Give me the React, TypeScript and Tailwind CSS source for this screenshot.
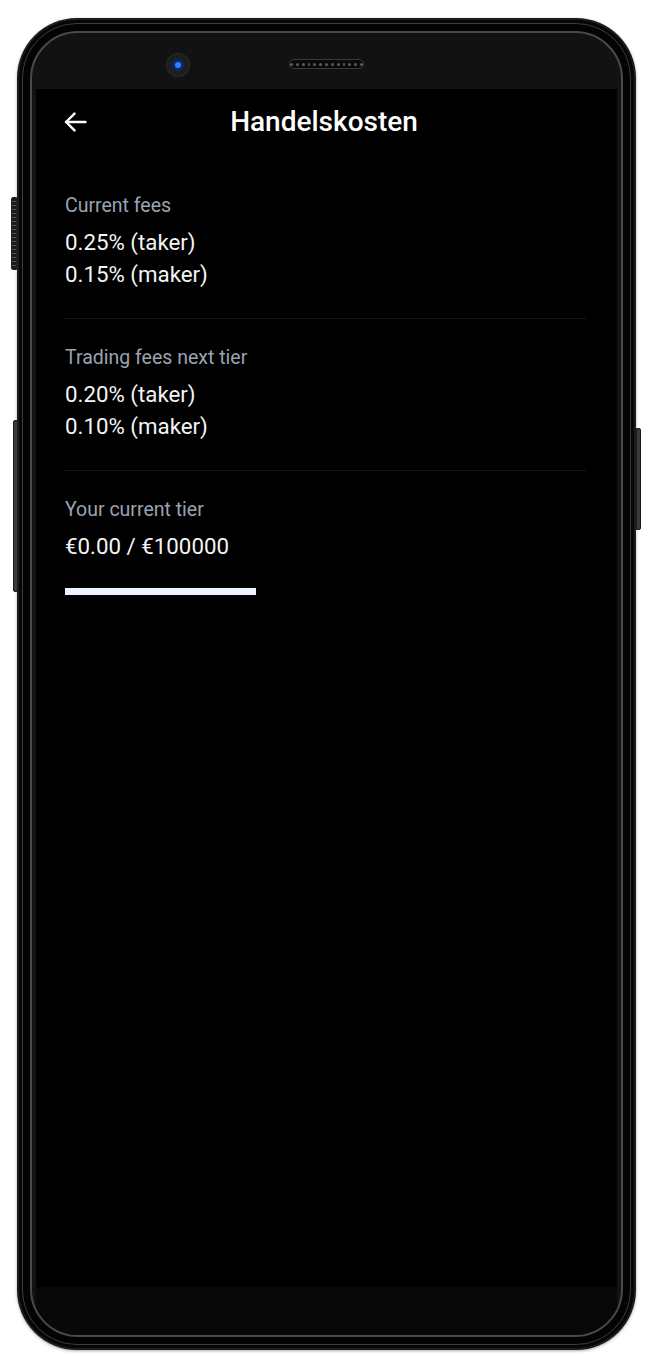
const sections = [
  { label: 'Current fees', values: ['0.25% (taker)', '0.15% (maker)'] },
  { label: 'Trading fees next tier', values: ['0.20% (taker)', '0.10% (maker)'] },
];

const BackArrow = () => (
  <svg viewBox="0 0 23 20" className="h-[20px] w-[23px]" fill="none" stroke="currentColor" strokeWidth={2.4} strokeLinecap="round" strokeLinejoin="round">
    <path d="M21.5 10H2" />
    <path d="M10.5 1.6L2 10l8.5 8.4" />
  </svg>
);

const SpeakerGrill = () => (
  <div className="flex h-[10px] w-[75px] items-center justify-center gap-[3px] rounded-full border border-[#3a3a3a] bg-[#0a0a0a]">
    {Array.from({ length: 13 }).map((_, i) => (
      <span key={i} className="h-[3px] w-[3px] rounded-full bg-[#5a5a5a]" />
    ))}
  </div>
);

const Camera = () => (
  <div className="flex h-[22px] w-[22px] items-center justify-center rounded-full bg-[#1e1e1e] ring-1 ring-[#2a2a2a]">
    <div className="flex h-[12px] w-[12px] items-center justify-center rounded-full bg-[#0a2a6a]">
      <div className="h-[6px] w-[6px] rounded-full bg-[#2f80ff]" />
    </div>
  </div>
);

const App = () => {
  return (
    <div className="min-h-[1356px] w-[665px] bg-white pl-[17px] pt-[18px] font-['Roboto',sans-serif]">
      <div className="relative h-[1332px] w-[619px]">
        {/* side buttons */}
        <div className="absolute left-[-6px] top-[179px] h-[73px] w-[6px] rounded-l-[2px] border border-[#222] bg-[repeating-linear-gradient(180deg,#1a1a1a_0px,#1a1a1a_3px,#555_3px,#555_4px)]" />
        <div className="absolute left-[-4px] top-[402px] h-[172px] w-[5px] rounded-l-[2px] border border-[#1a1a1a] bg-[#3a3a3a]" />
        <div className="absolute right-[-5px] top-[410px] h-[102px] w-[5px] rounded-r-[2px] border border-[#1a1a1a] bg-[#3a3a3a]" />

        {/* frame */}
        <div className="h-full w-full rounded-[60px] bg-[#1c1c1c] p-[2px] shadow-[0_1px_3px_rgba(0,0,0,0.35)]">
          <div className="h-full w-full rounded-[58px] bg-[#060606] p-[3px]">
            <div className="h-full w-full rounded-[55px] border border-[#3c3c3c] bg-[#030303] p-[7px]">
              <div className="flex h-full w-full flex-col overflow-hidden rounded-[48px] border-2 border-[#4a4a4a] bg-[#121212] px-[4px]">
                {/* top bezel */}
                <div className="flex h-[56px] shrink-0 items-start">
                  <div className="ml-[131px] mt-[21px]">
                    <Camera />
                  </div>
                  <div className="ml-[100px] mt-[26px]">
                    <SpeakerGrill />
                  </div>
                </div>

                {/* screen */}
                <div className="flex flex-1 flex-col bg-black text-white">
                  <div className="relative flex h-[66px] items-center justify-center">
                    <div className="absolute left-[28px] top-[23px]">
                      <BackArrow />
                    </div>
                    <h1 className="mr-[5px] text-[28px] font-medium">Handelskosten</h1>
                  </div>

                  <div className="pl-[29px] pr-[31px] pt-[38px]">
                    {sections.map((s) => (
                      <div key={s.label}>
                        <div className="text-[19.5px] leading-[26px] text-[#9ba3b2]">{s.label}</div>
                        <div className="mt-[7px]">
                          {s.values.map((v) => (
                            <div key={v} className="text-[22.3px] leading-[32px] text-[#f4f4f4]">
                              {v}
                            </div>
                          ))}
                        </div>
                        <div className="mb-[26px] mt-[28px] h-px bg-[#171717]" />
                      </div>
                    ))}

                    <div className="text-[19.5px] leading-[26px] text-[#9ba3b2]">Your current tier</div>
                    <div className="mt-[7px] text-[22.3px] leading-[32px] text-[#f4f4f4]">€0.00 / €100000</div>
                    <div className="mt-[26px] h-[7px] w-[191px] bg-[#eef4ff]" />
                  </div>
                </div>

                {/* bottom bezel */}
                <div className="h-[48px] shrink-0 bg-[#080808]" />
              </div>
            </div>
          </div>
        </div>
      </div>
    </div>
  );
};

export default App;
